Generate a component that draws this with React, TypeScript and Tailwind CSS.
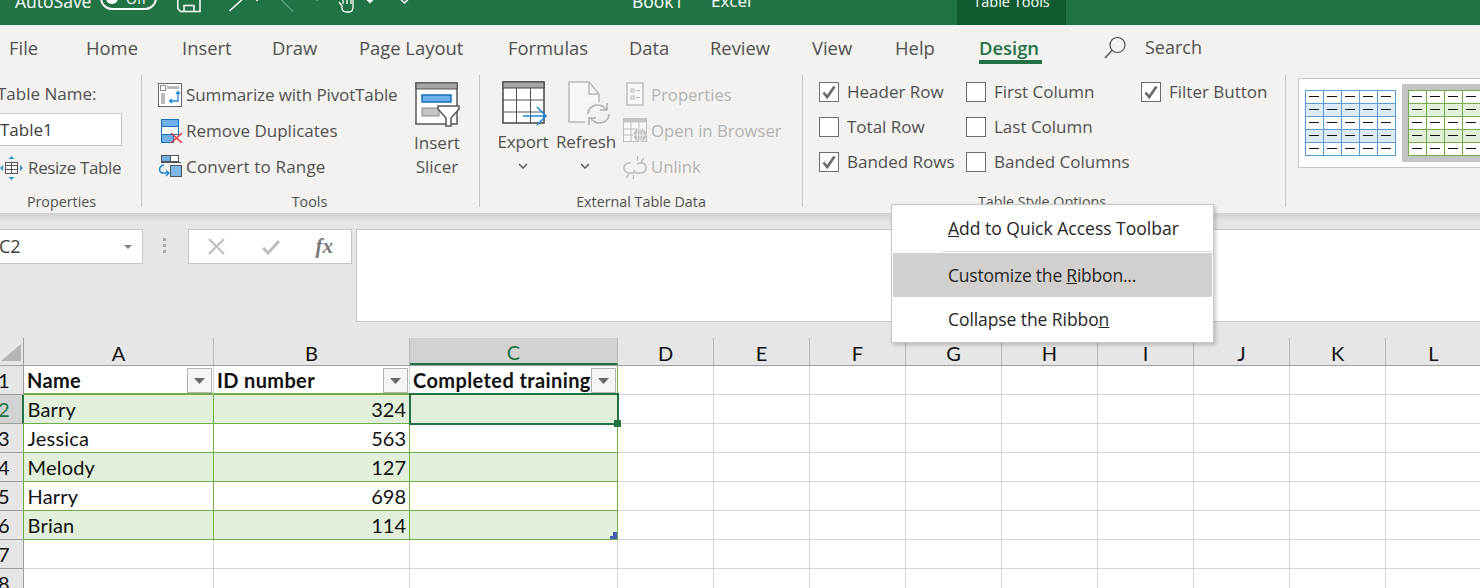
import React from "react";

const SANS = "font-['Open_Sans',_'Noto_Sans',sans-serif]";

const tabs: { t: string; c: string }[] = [
  { t: "File", c: "w-[77px]" },
  { t: "Home", c: "w-[96px]" },
  { t: "Insert", c: "w-[90px]" },
  { t: "Draw", c: "w-[87px]" },
  { t: "Page Layout", c: "w-[149px]" },
  { t: "Formulas", c: "w-[121px]" },
  { t: "Data", c: "w-[81px]" },
  { t: "Review", c: "w-[102px]" },
  { t: "View", c: "w-[83px]" },
  { t: "Help", c: "w-[84px]" },
];

function Check({ on, label }: { on?: boolean; label: string }) {
  return (
    <div className="flex items-center gap-[8px] h-[35px]">
      <div className="w-[20px] h-[20px] border border-[#6e6e6e] bg-white flex items-center justify-center">
        {on && (
          <svg width="16" height="16" viewBox="0 0 16 16">
            <path d="M2.5 8.5 L6.2 13 L13.5 2.5" fill="none" stroke="#6a6a6a" strokeWidth="2.6" />
          </svg>
        )}
      </div>
      <span className="whitespace-nowrap">{label}</span>
    </div>
  );
}

function MiniTable({ line, band }: { line: string; band: string }) {
  const xs = [0, 18, 36, 54, 72, 90];
  const ys = [0, 13, 26, 39, 52, 65];
  return (
    <svg width="91" height="66" viewBox="0 0 91 66" className="shrink-0">
      <rect x="0.5" y="0.5" width="90" height="65" fill="#fff" />
      <rect x="0.5" y="13" width="90" height="13" fill={band} />
      <rect x="0.5" y="39" width="90" height="13" fill={band} />
      {xs.map((x) => (
        <line key={x} x1={x + 0.5} x2={x + 0.5} y1="0" y2="66" stroke={line} />
      ))}
      {ys.map((y) => (
        <line key={y} y1={y + 0.5} y2={y + 0.5} x1="0" x2="91" stroke={line} />
      ))}
      {ys.slice(0, 5).map((y) =>
        xs.slice(0, 5).map((x) => (
          <line key={`${x}-${y}`} x1={x + 4} x2={x + 14} y1={y + 6.5} y2={y + 6.5} stroke="#111" />
        ))
      )}
    </svg>
  );
}

function Group({
  w,
  label,
  children,
  pl,
  lc,
}: {
  w: string;
  label: string;
  children: React.ReactNode;
  pl?: string;
  lc?: string;
}) {
  return (
    <div className={`${w} shrink-0 flex flex-col border-r border-[#c6c6c6] ${pl ?? ""}`}>
      <div className="flex-1 min-h-0">{children}</div>
      <div className={`h-[18px] -mb-[4px] text-center text-[14.3px] leading-[18px] text-[#505050] whitespace-nowrap ${lc ?? ""}`}>
        {label}
      </div>
    </div>
  );
}

function PivotIcon() {
  return (
    <svg width="24" height="24" viewBox="0 0 24 24" className="shrink-0">
      <rect x="0.5" y="0.5" width="23" height="23" fill="#fff" stroke="#666" />
      <rect x="2.5" y="2.5" width="5" height="5" fill="none" stroke="#888" />
      <rect x="9" y="3" width="12" height="3" fill="#bbb" />
      <rect x="3" y="10" width="4" height="11" fill="#bbb" />
      <path d="M20 9v9h-8M18 11l2-2.500 2 2.500M14 16l-2.500 2 2.500 2" fill="none" stroke="#1e88d2" strokeWidth="1.300" />
    </svg>
  );
}
function DupIcon() {
  return (
    <svg width="22" height="24" viewBox="0 0 22 24" className="shrink-0">
      <rect x="0.5" y="0.5" width="17" height="7" fill="#6fb1e6" stroke="#1570bd" />
      <rect x="0.5" y="7.500" width="17" height="8" fill="#fff" stroke="#1570bd" />
      <rect x="0.5" y="15.500" width="12" height="8" fill="#6fb1e6" stroke="#1570bd" />
      <path d="M10 14l11 10M21 14L10 24" stroke="#e8393f" strokeWidth="1.600" />
    </svg>
  );
}
function ConvertIcon() {
  return (
    <svg width="24" height="24" viewBox="0 0 24 24" className="shrink-0">
      <rect x="3.500" y="0.500" width="9" height="6" fill="#6fb1e6" stroke="#555" />
      <rect x="12.500" y="0.500" width="8" height="6" fill="#fff" stroke="#555" />
      <path d="M3 7.500h20" stroke="#555" />
      <rect x="12.500" y="10.500" width="11" height="11" fill="#7ab8ea" stroke="#555" />
      <path d="M6 10C1 11 0 16 4 18h7M8 15.500L11 18l-3 3" fill="none" stroke="#1e88d2" strokeWidth="1.400" />
    </svg>
  );
}
function SlicerIcon() {
  return (
    <svg width="45" height="45" viewBox="0 0 45 45" className="shrink-0">
      <rect x="1" y="1" width="41" height="41" fill="#fff" stroke="#555" strokeWidth="1.500" />
      <rect x="1" y="1" width="41" height="6" fill="#a6a6a6" stroke="#555" />
      <rect x="7" y="13" width="29" height="7" fill="#6fb1e6" stroke="#1570bd" strokeWidth="1.500" />
      <rect x="7" y="26" width="17" height="8" fill="#c4c4c4" stroke="#888" />
      <path d="M23 24h21v3l-8 9v8h-5v-8l-8-9z" fill="#fff" stroke="#555" strokeWidth="1.500" />
    </svg>
  );
}
function ExportIcon() {
  return (
    <svg width="46" height="46" viewBox="0 0 46 46" className="shrink-0">
      <rect x="1" y="1" width="41" height="41" fill="#fff" stroke="#444" strokeWidth="1.500" />
      <rect x="1" y="1" width="41" height="6" fill="#a6a6a6" stroke="#444" />
      <path d="M14.500 7v35M28.500 7v35M1 19h41M1 31h41" stroke="#555" />
      <path d="M21 35h23M35 26l9 9-9 9" fill="none" stroke="#1e88d2" strokeWidth="1.600" />
    </svg>
  );
}
function RefreshIcon() {
  return (
    <svg width="44" height="46" viewBox="0 0 44 46" className="shrink-0">
      <path d="M1 1h20l10 12v28H1z" fill="#f6f6f6" stroke="#b8b8b8" strokeWidth="1.500" />
      <path d="M21 1v12h10" fill="none" stroke="#b8b8b8" strokeWidth="1.500" />
      <rect x="17" y="21" width="27" height="25" fill="#f3f2f1" />
      <path d="M20 33c0-7 8-11 14-8l4 3M39 22v7h-7M41 33c0 7-8 11-14 8l-4-3M21 44v-7h7" fill="none" stroke="#b0b0b0" strokeWidth="1.500" />
    </svg>
  );
}
function PropsIcon() {
  return (
    <svg width="20" height="24" viewBox="0 0 20 24" className="shrink-0">
      <rect x="1" y="1" width="16" height="22" fill="#f8f8f8" stroke="#bdbdbd" strokeWidth="1.500" />
      <rect x="5" y="7" width="3" height="3" fill="none" stroke="#b5b5b5" />
      <rect x="5" y="14" width="3" height="3" fill="none" stroke="#b5b5b5" />
      <path d="M10 8.500h4M10 15.500h4" stroke="#b5b5b5" />
    </svg>
  );
}
function BrowserIcon() {
  return (
    <svg width="24" height="24" viewBox="0 0 24 24" className="shrink-0">
      <rect x="0.500" y="0.500" width="23" height="23" fill="#f8f8f8" stroke="#bdbdbd" />
      <rect x="0.500" y="0.500" width="23" height="4" fill="#c4c4c4" />
      <path d="M8 4v20M16 4v8M0 11h14M0 17h10" stroke="#bdbdbd" />
      <circle cx="17" cy="17" r="6.500" fill="#bdbdbd" />
      <path d="M10.500 17h13M17 10.500v13" stroke="#f3f2f1" />
      <ellipse cx="17" cy="17" rx="3" ry="6.500" fill="none" stroke="#f3f2f1" />
    </svg>
  );
}
function UnlinkIcon() {
  return (
    <svg width="24" height="24" viewBox="0 0 24 24" className="shrink-0">
      <path d="M8 8H6a5 5 0 0 0 0 10h5M14 9l3-1c3-1 6 1 6 5s-3 5-6 5h-3c-2 0-3-1-3-3" fill="none" stroke="#bdbdbd" strokeWidth="1.500" />
      <path d="M15 1l-1 5M21 3l-3 4M6 19l-3 4M11 20l-1 4" stroke="#bdbdbd" strokeWidth="1.300" />
    </svg>
  );
}
function ResizeIcon() {
  return (
    <svg width="23" height="24" viewBox="0 0 23 24" className="shrink-0">
      <rect x="5.500" y="6.500" width="12" height="11" fill="#fff" stroke="#555" />
      <path d="M5 9.500h13M5 13.500h13M11.500 7v10" stroke="#555" />
      <path d="M11.500 0l-3 3h6zM11.500 24l-3-3h6zM0 12l3-3v6zM23 12l-3-3v6z" fill="#2c8fd8" />
    </svg>
  );
}

const cols = [
  { l: "A", c: "w-[190px]" },
  { l: "B", c: "w-[196px]" },
  { l: "C", c: "w-[208px]" },
  { l: "D", c: "w-[96px]" },
  { l: "E", c: "w-[96px]" },
  { l: "F", c: "w-[96px]" },
  { l: "G", c: "w-[96px]" },
  { l: "H", c: "w-[96px]" },
  { l: "I", c: "w-[96px]" },
  { l: "J", c: "w-[96px]" },
  { l: "K", c: "w-[96px]" },
  { l: "L", c: "w-[96px]" },
];

const people: [string, string][] = [
  ["Barry", "324"],
  ["Jessica", "563"],
  ["Melody", "127"],
  ["Harry", "698"],
  ["Brian", "114"],
];

function FilterBtn() {
  return (
    <div className="absolute right-[1px] top-[2px] w-[25px] h-[25px] border border-[#b4b4b4] bg-[#f4f5f7] flex items-center justify-center">
      <svg width="11" height="6" viewBox="0 0 11 6">
        <path d="M0 0h11L5.500 6z" fill="#6b6b6b" />
      </svg>
    </div>
  );
}

function Empty() {
  return <div className="h-full shrink-0 border-r border-b border-[#d4d4d4] w-[96px]" />;
}

function Row({ n, children, tone }: { n: number; children: React.ReactNode; tone: "active" | "table" | "plain" }) {
  const cls =
    tone === "active"
      ? "bg-[#d2d2d2] text-[#217346] border-r-2 border-r-[#217346]"
      : tone === "table"
        ? "bg-[#e6e6e6] text-[#111] border-r border-r-[#70ad47]"
        : "bg-[#e6e6e6] text-[#111] border-r border-r-[#9e9e9e]";
  return (
    <div className="flex h-[29px]">
      <div className={`w-[24px] shrink-0 border-b border-b-[#9e9e9e] flex items-center text-[20px] leading-none overflow-hidden ${cls}`}>
        <span className="-ml-[2px]">{n}</span>
      </div>
      {children}
      {Array.from({ length: 9 }).map((_, i) => (
        <Empty key={i} />
      ))}
    </div>
  );
}

export default function App() {
  return (
    <div className={`relative w-[1480px] h-[588px] overflow-hidden bg-white text-[#505050] text-[17px] ${SANS}`}>
      {/* Title bar */}
      <div className="h-[25px] bg-[#217346] overflow-hidden text-white">
        <div className="h-[39px] -mt-[14px] pb-[5px] flex items-center text-[17.500px] whitespace-nowrap">
          <span className="-mt-[3px] ml-[15px] w-[85px] shrink-0">AutoSave</span>
          <div className="-mt-[10px] w-[57px] h-[24px] rounded-full border-2 border-white flex items-center pl-[4px] text-[14px] gap-[8px] shrink-0">
            <span className="w-[12px] h-[12px] rounded-full bg-white" />
            <span>Off</span>
          </div>
          <svg width="235" height="34" viewBox="0 0 235 34" className="ml-[20px] shrink-0">
            <path d="M0.750 0V22.500L3.500 25.500H23V0" fill="none" stroke="#fff" strokeWidth="1.500" />
            <path d="M7 25.500V19.500H17V25.500" fill="none" stroke="#fff" strokeWidth="1.500" />
            <path d="M52.500 25L80 0" stroke="#fff" strokeWidth="1.500" />
            <path d="M80 12.500v2.500" stroke="#fff" strokeWidth="2" />
            <path d="M100 9.500L116.500 26" stroke="#5c9c78" strokeWidth="1.500" />
            <path d="M140 12.500v2.500" stroke="#5c9c78" strokeWidth="2" />
            <path d="M162 16l3 4v2c0 3 2 4 5 4h2c3 0 4-2 4-5V10M166 6v12M170 6v12M174 6v12" fill="none" stroke="#fff" strokeWidth="1.300" />
            <path d="M189 13.500h8L193 17.500z" fill="#fff" />
            <path d="M223 12.500l4.500 4.500 4.500-4.500" fill="none" stroke="#fff" strokeWidth="1.500" />
          </svg>
          <span className="-mt-[4px] ml-[220px] w-[79px] shrink-0">Book1</span>
          <span className="-mt-[4px] w-[246px] shrink-0 text-[17px]">Excel</span>
          <div className="-mb-[5px] self-stretch w-[109px] bg-[#105c30] flex items-center justify-center text-[14.500px]">
            <span className="-mt-[8px]">Table Tools</span>
          </div>
        </div>
      </div>

      {/* Tabs */}
      <div className="h-[45px] bg-[#f3f2f1] flex items-center pl-[9px] text-[18.400px] whitespace-nowrap">
        {tabs.map((t) => (
          <div key={t.t} className={`${t.c} shrink-0`}>
            {t.t}
          </div>
        ))}
        <div className="w-[125px] shrink-0 relative font-semibold text-[#217346]">
          <span>Design</span>
          <div className="absolute left-0 top-[26px] w-[63px] h-[4px] bg-[#217346]" />
        </div>
        <svg width="22" height="24" viewBox="0 0 22 24" className="shrink-0">
          <circle cx="13.500" cy="9" r="7.500" fill="none" stroke="#505050" strokeWidth="1.200" />
          <path d="M8 14.500L1 22" stroke="#505050" strokeWidth="1.400" />
        </svg>
        <span className="ml-[19px] text-[18px]">Search</span>
      </div>

      {/* Ribbon */}
      <div className="h-[143px] bg-[#f3f2f1] pt-[5px] pb-[6px] flex">
        <Group w="w-[142px]" label="Properties" lc="pr-[18px]">
          <div className="pt-[10px]">
            <div className="-ml-[3px] leading-[18px] h-[18px] whitespace-nowrap">Table Name:</div>
            <div className="mt-[10px] h-[33px] w-[122px] border border-l-0 border-[#c6c6c6] bg-white flex items-center text-[#3c3c3c]">
              Table1
            </div>
            <div className="mt-[9px] flex items-center gap-[5px]">
              <ResizeIcon />
              <span className="whitespace-nowrap tracking-[-0.35px]">Resize Table</span>
            </div>
          </div>
        </Group>

        <Group w="w-[338px]" label="Tools" pl="pl-[16px]" lc="pr-[18px]">
          <div className="flex pt-[1.500px]">
            <div className="w-[250px] shrink-0 flex flex-col">
              <div className="h-[36.300px] flex items-center gap-[4px]">
                <PivotIcon />
                <span className="whitespace-nowrap tracking-[-0.12px]">Summarize with PivotTable</span>
              </div>
              <div className="h-[36.300px] flex items-center gap-[3px] pl-[3px]">
                <DupIcon />
                <span className="whitespace-nowrap">Remove Duplicates</span>
              </div>
              <div className="h-[36.300px] flex items-center gap-[4px]">
                <ConvertIcon />
                <span className="whitespace-nowrap tracking-[0.18px]">Convert to Range</span>
              </div>
            </div>
            <div className="w-[58px] flex flex-col items-center pt-[5px] leading-[24px]">
              <SlicerIcon />
              <div className="mt-[4px]">Insert</div>
              <div>Slicer</div>
            </div>
          </div>
        </Group>

        <Group w="w-[323px]" label="External Table Data">
          <div className="flex pt-[6px] text-[17px]">
            <div className="ml-[17px] w-[52px] shrink-0 flex flex-col items-center leading-[24px]">
              <div className="ml-[3px] mb-[3px]"><ExportIcon /></div>
              <div className="tracking-[-0.15px]">Export</div>
              <svg width="10" height="6" viewBox="0 0 10 6" className="mt-[9px]">
                <path d="M1 1l4 4 4-4" fill="none" stroke="#505050" strokeWidth="1.300" />
              </svg>
            </div>
            <div className="ml-[7px] w-[58px] shrink-0 flex flex-col items-center leading-[24px]">
              <div className="ml-[10px] mb-[3px]"><RefreshIcon /></div>
              <div className="tracking-[-0.1px] ml-[2px]">Refresh</div>
              <svg width="10" height="6" viewBox="0 0 10 6" className="mt-[9px]">
                <path d="M1 1l4 4 4-4" fill="none" stroke="#505050" strokeWidth="1.300" />
              </svg>
            </div>
            <div className="ml-[9px] -mt-[5px] flex flex-col text-[#b4b4b4] text-[16.700px]">
              <div className="h-[36.300px] flex items-center gap-[5px] pl-[3px]">
                <PropsIcon />
                <span className="whitespace-nowrap">Properties</span>
              </div>
              <div className="h-[36.300px] flex items-center gap-[4px]">
                <BrowserIcon />
                <span className="whitespace-nowrap">Open in Browser</span>
              </div>
              <div className="h-[36.300px] flex items-center gap-[4px]">
                <UnlinkIcon />
                <span className="whitespace-nowrap">Unlink</span>
              </div>
            </div>
          </div>
        </Group>

        <Group w="w-[483px]" label="Table Style Options" pl="pl-[16px]" lc="pr-[20px]">
          <div className="flex -mt-[1px]">
            <div className="w-[147px] shrink-0">
              <Check on label="Header Row" />
              <Check label="Total Row" />
              <Check on label="Banded Rows" />
            </div>
            <div className="w-[175px] shrink-0">
              <Check label="First Column" />
              <Check label="Last Column" />
              <Check label="Banded Columns" />
            </div>
            <div>
              <Check on label="Filter Button" />
            </div>
          </div>
        </Group>

        <div className="flex-1 pl-[12px] pt-[3px] min-w-0">
          <div className="w-[220px] h-[90px] border border-[#c8c8c8] bg-white flex items-center pl-[6px] gap-[6px]">
            <MiniTable line="#5b9bd5" band="#ddebf7" />
            <div className="bg-[#c4c4c4] h-[78px] px-[6px] flex items-center">
              <MiniTable line="#70ad47" band="#e2efda" />
            </div>
          </div>
        </div>
      </div>

      {/* Formula bar */}
      <div className="h-[125px] bg-[#e6e6e6] bg-gradient-to-b from-[#d0d0d0] from-0% to-[#e6e6e6] to-[7%] pt-[16px] flex items-start text-[#3c3c3c]">
        <div className="w-[143px] shrink-0 h-[35px] border border-l-0 border-[#c6c6c6] bg-white flex items-center justify-between pr-[10px]">
          <span className="-ml-[1px] text-[18px]">C2</span>
          <svg width="8" height="4" viewBox="0 0 8 4">
            <path d="M0 0h8L4 4z" fill="#808080" />
          </svg>
        </div>
        <svg width="4" height="16" viewBox="0 0 4 16" className="ml-[20px] mt-[9px] shrink-0">
          <rect x="0" y="0" width="3" height="3" fill="#a8a8a8" />
          <rect x="0" y="6" width="3" height="3" fill="#a8a8a8" />
          <rect x="0" y="12" width="3" height="3" fill="#a8a8a8" />
        </svg>
        <div className="ml-[21px] w-[164px] shrink-0 h-[35px] border border-[#c6c6c6] bg-white flex items-center pl-[18px] pr-[18px] justify-between">
          <svg width="19" height="17" viewBox="0 0 19 17">
            <path d="M2 1l15 15M17 1L2 16" stroke="#bdbdbd" strokeWidth="2" />
          </svg>
          <svg width="20" height="16" viewBox="0 0 20 16">
            <path d="M2 9l5 5L18 2" fill="none" stroke="#bdbdbd" strokeWidth="3" />
          </svg>
          <span className="font-['Liberation_Serif',serif] italic font-bold text-[21px] leading-none text-[#777]">fx</span>
        </div>
        <div className="ml-[4px] flex-1 h-[93px] border border-r-0 border-[#c6c6c6] bg-white" />
      </div>

      {/* Sheet */}
      <div className="font-['Lato',sans-serif] text-[20px] text-[#111]">
        <div className="flex h-[28px] bg-[#e6e6e6] border-b border-[#9e9e9e]">
          <div className="w-[24px] shrink-0 border-r border-[#9e9e9e] relative overflow-hidden">
            <svg width="24" height="27" viewBox="0 0 24 27" className="absolute inset-0">
              <path d="M21 6v17H1z" fill="#b5b5b5" />
            </svg>
          </div>
          {cols.map((c) => (
            <div
              key={c.l}
              className={`${c.c} shrink-0 border-r border-[#b8b8b8] flex items-center justify-center leading-none pt-[2px] ${
                c.l === "C" ? "bg-[#d2d2d2] text-[#217346] border-b-2 border-b-[#217346]" : ""
              }`}
            >
              {c.l}
            </div>
          ))}
        </div>

        {/* Header row */}
        <Row n={1} tone="plain">
          <div className="relative w-[190px] shrink-0 border-r border-[#d4d4d4] border-b-2 border-b-[#70ad47] font-bold tracking-[0.3px] flex items-center pl-[3px] pt-[1px]">
            Name
            <FilterBtn />
          </div>
          <div className="relative w-[196px] shrink-0 border-r border-[#d4d4d4] border-b-2 border-b-[#70ad47] font-bold tracking-[0.35px] flex items-center pl-[3px] pt-[1px]">
            ID number
            <FilterBtn />
          </div>
          <div className="relative w-[208px] shrink-0 border-r border-[#70ad47] border-b-2 border-b-[#70ad47] font-bold tracking-[0.4px] flex items-center pl-[3px] pt-[1px] whitespace-nowrap">
            Completed training
            <FilterBtn />
          </div>
        </Row>

        {people.map((p, i) => {
          const band = i % 2 === 0 ? "bg-[#e2efda]" : "bg-white";
          return (
            <Row key={p[0]} n={i + 2} tone={i === 0 ? "active" : "table"}>
              <div className={`w-[190px] shrink-0 border-r border-b border-[#70ad47] flex items-center pl-[3.500px] tracking-[0.2px] ${band}`}>{p[0]}</div>
              <div className={`w-[196px] shrink-0 border-r border-b border-[#70ad47] flex items-center justify-end pr-[3px] ${band}`}>{p[1]}</div>
              <div className={`relative w-[208px] shrink-0 border-r border-b border-[#70ad47] ${band}`}>
                {i === 4 && (
                  <svg width="7" height="7" viewBox="0 0 7 7" className="absolute right-0 bottom-0">
                    <path d="M0 7V4h3V0h4v7z" fill="#4a5ab8" />
                  </svg>
                )}
              </div>
            </Row>
          );
        })}

        {[7, 8].map((n) => (
          <Row key={n} n={n} tone="plain">
            <div className="w-[190px] shrink-0 border-r border-b border-[#d4d4d4]" />
            <div className="w-[196px] shrink-0 border-r border-b border-[#d4d4d4]" />
            <div className="w-[208px] shrink-0 border-r border-b border-[#d4d4d4]" />
          </Row>
        ))}
      </div>

      {/* Active cell outline */}
      <div className="absolute left-[409px] top-[393px] w-[210px] h-[32px] border-2 border-[#217346]">
        <div className="absolute -right-[4px] -bottom-[4px] w-[7px] h-[7px] bg-[#217346]" />
      </div>

      {/* Context menu */}
      <div className="absolute left-[891px] top-[204px] w-[323px] h-[139px] bg-white border border-[#c6c6c6] shadow-[2px_2px_4px_rgba(0,0,0,0.2)] text-[#262626] text-[17.500px] p-[1px]">
        <div className="h-[45px] pl-[55px] flex items-center">
          <span><span className="underline">A</span>dd to Quick Access Toolbar</span>
        </div>
        <div className="ml-[49px] h-px bg-[#dcdcdc]" />
        <div className="h-[44px] mt-[1px] pl-[55px] flex items-center bg-[#d2d0ce]">
          <span className="tracking-[-0.22px]">Customize the <span className="underline">R</span>ibbon...</span>
        </div>
        <div className="h-[45px] pl-[55px] flex items-center">
          <span className="tracking-[-0.08px]">Collapse the Ribbo<span className="underline">n</span></span>
        </div>
      </div>
    </div>
  );
}
